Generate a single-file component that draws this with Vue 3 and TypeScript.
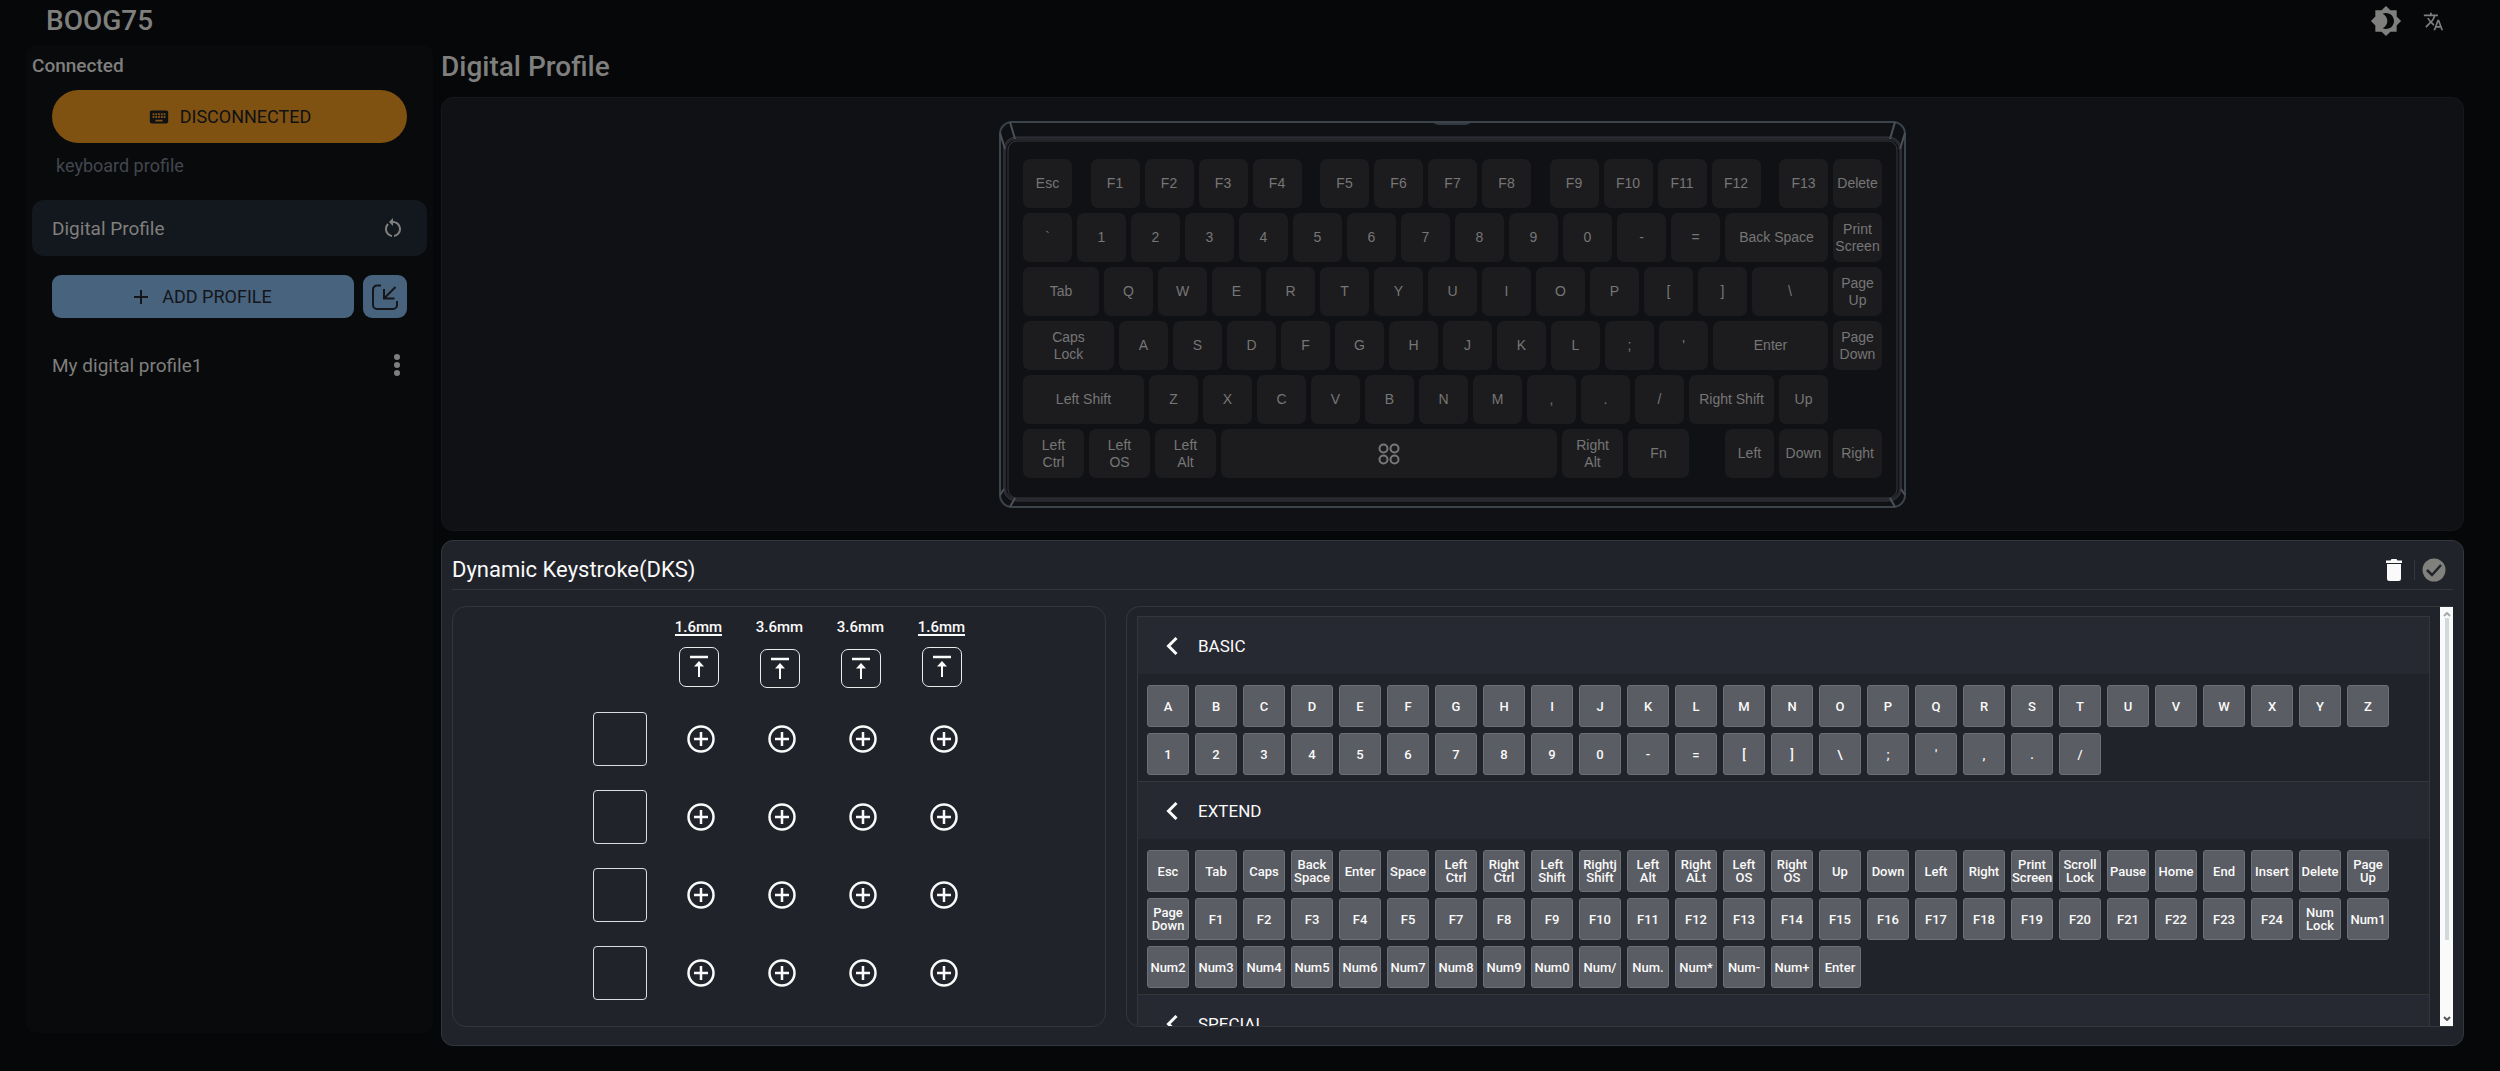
<script setup lang="ts">
interface Key {
  label: string
  width?: number
  grow?: boolean
  gap?: number
  icon?: boolean
}

const k = (label: string, width?: number): Key => ({ label, width })
const keys = (labels: string): Key[] => labels.split(' ').map((label) => k(label))
const fill = (label: string): Key => ({ label, grow: true })
const space = (gap?: number): Key => ({ label: '', gap: gap ?? 0 })

const rows: Key[][] = [
  [k('Esc'), space(), ...keys('F1 F2 F3 F4'), space(), ...keys('F5 F6 F7 F8'), space(), ...keys('F9 F10 F11 F12'), space(), k('F13'), k('Delete')],
  [...keys('` 1 2 3 4 5 6 7 8 9 0 - ='), fill('Back Space'), k('Print\nScreen')],
  [k('Tab', 76), ...keys('Q W E R T Y U I O P [ ]'), fill('\\'), k('Page\nUp')],
  [k('Caps\nLock', 91), ...keys("A S D F G H J K L ; '"), fill('Enter'), k('Page\nDown')],
  [k('Left Shift', 121), ...keys('Z X C V B N M , . /'), fill('Right Shift'), k('Up'), space(49)],
  [k('Left\nCtrl', 61), k('Left\nOS', 61), k('Left\nAlt', 61), { label: 'Space', grow: true, icon: true }, k('Right\nAlt', 61), k('Fn', 61), space(26), k('Left'), k('Down'), k('Right')],
]

const groups: { name: string; keys: string[] }[] = [
  {
    name: 'BASIC',
    keys: "A B C D E F G H I J K L M N O P Q R S T U V W X Y Z 1 2 3 4 5 6 7 8 9 0 - = [ ] \\ ; ' , . /".split(' '),
  },
  {
    name: 'EXTEND',
    keys: [
      'Esc', 'Tab', 'Caps', 'Back Space', 'Enter', 'Space', 'Left Ctrl', 'Right Ctrl', 'Left Shift', 'Rightj Shift',
      'Left Alt', 'Right ALt', 'Left OS', 'Right OS', 'Up', 'Down', 'Left', 'Right', 'Print Screen', 'Scroll Lock',
      'Pause', 'Home', 'End', 'Insert', 'Delete', 'Page Up', 'Page Down', 'F1', 'F2', 'F3', 'F4', 'F5', 'F7', 'F8',
      'F9', 'F10', 'F11', 'F12', 'F13', 'F14', 'F15', 'F16', 'F17', 'F18', 'F19', 'F20', 'F21', 'F22', 'F23', 'F24',
      'Num Lock', 'Num1', 'Num2', 'Num3', 'Num4', 'Num5', 'Num6', 'Num7', 'Num8', 'Num9', 'Num0', 'Num/', 'Num.',
      'Num*', 'Num-', 'Num+', 'Enter',
    ],
  },
  { name: 'SPECIAL', keys: [] },
]

const travel: { depth: string; active: boolean }[] = [
  { depth: '1.6mm', active: true },
  { depth: '3.6mm', active: false },
  { depth: '3.6mm', active: false },
  { depth: '1.6mm', active: true },
]
</script>

<template>
  <div class="app">
    <header class="topbar">
      <h1 class="brand">BOOG75</h1>
      <div class="tools">
        <button class="icon-btn" aria-label="Toggle theme">
          <svg width="32" height="32" viewBox="0 0 24 24" fill="currentColor"><path d="M20 8.69V4h-4.69L12 .69 8.69 4H4v4.69L.69 12 4 15.31V20h4.69L12 23.31 15.31 20H20v-4.69L23.31 12 20 8.69zM12 18c-.89 0-1.74-.2-2.5-.55C11.56 16.5 13 14.42 13 12s-1.44-4.5-3.5-5.45C10.26 6.2 11.11 6 12 6c3.31 0 6 2.69 6 6s-2.69 6-6 6z" /></svg>
        </button>
        <button class="icon-btn" aria-label="Language">
          <svg width="21" height="21" viewBox="0 0 24 24" fill="currentColor"><path d="M12.87 15.07l-2.54-2.51.03-.03c1.74-1.94 2.98-4.17 3.71-6.53H17V4h-7V2H8v2H1v1.99h11.17C11.5 7.92 10.44 9.75 9 11.35 8.07 10.32 7.3 9.19 6.69 8h-2c.73 1.63 1.73 3.17 2.98 4.56l-5.09 5.02L4 19l5-5 3.11 3.11.76-2.04zM18.5 10h-2L12 22h2l1.12-3h4.75L21 22h2l-4.5-12zm-2.62 7l1.62-4.33L19.12 17h-3.24z" /></svg>
        </button>
      </div>
    </header>

    <div class="columns">
      <aside class="sidebar">
        <h2 class="status">Connected</h2>
        <button class="connect">
          <svg width="22" height="22" viewBox="0 0 24 24" fill="currentColor"><path d="M20 5H4c-1.1 0-1.99.9-1.99 2L2 17c0 1.1.9 2 2 2h16c1.1 0 2-.9 2-2V7c0-1.1-.9-2-2-2zm-9 3h2v2h-2V8zm0 3h2v2h-2v-2zM8 8h2v2H8V8zm0 3h2v2H8v-2zm-1 2H5v-2h2v2zm0-3H5V8h2v2zm9 7H8v-2h8v2zm0-4h-2v-2h2v2zm0-3h-2V8h2v2zm3 3h-2v-2h2v2zm0-3h-2V8h2v2z" /></svg>
          DISCONNECTED
        </button>
        <p class="caption">keyboard profile</p>
        <div class="profile profile--active">
          <span>Digital Profile</span>
          <button class="icon-btn" aria-label="Reset profile">
            <svg width="24" height="24" viewBox="0 0 24 24" fill="currentColor"><path d="M12 5V2L8 6l4 4V7c3.31 0 6 2.69 6 6 0 2.97-2.17 5.43-5 5.91v2.02c3.95-.49 7-3.85 7-7.93 0-4.42-3.58-8-8-8zM6 13c0-1.65.67-3.15 1.76-4.24L6.34 7.34C4.9 8.79 4 10.79 4 13c0 4.08 3.05 7.44 7 7.93v-2.02c-2.83-.48-5-2.94-5-5.91z" /></svg>
          </button>
        </div>
        <div class="actions">
          <button class="blue add">
            <svg width="14" height="14" viewBox="0 0 14 14" fill="none" stroke="currentColor" stroke-width="2"><path d="M7 0v14M0 7h14" /></svg>
            ADD PROFILE
          </button>
          <button class="blue import" aria-label="Import profile">
            <svg width="26" height="26" viewBox="0 0 26 26" fill="none" stroke="currentColor" stroke-width="2"><path d="M9 1.500H5A4 4 0 0 0 1 5.500V21a4 4 0 0 0 4 4h16a4 4 0 0 0 4-4v-4M23.500 3 12 14.500M12 5v9.500h10.500" /></svg>
          </button>
        </div>
        <div class="profile">
          <span>My digital profile1</span>
          <button class="icon-btn more" aria-label="Profile menu">
            <svg width="6" height="24" viewBox="0 0 6 24" fill="currentColor"><circle cx="3" cy="4" r="3" /><circle cx="3" cy="12" r="3" /><circle cx="3" cy="20" r="3" /></svg>
          </button>
        </div>
      </aside>

      <main class="main">
        <h2 class="title">Digital Profile</h2>

        <section class="stage">
          <div class="keyboard">
            <svg class="case" viewBox="0 0 907 387" fill="none" stroke="#4a5058">
              <rect x="1" y="1" width="905" height="385" rx="12" stroke="#3b434b" stroke-width="2" />
              <rect x="5.500" y="17.500" width="896" height="361" rx="12" stroke="#25262c" stroke-width="3" />
              <rect x="9" y="20" width="889" height="357" rx="9" stroke="#34353c" />
              <rect x="5" y="16" width="897" height="364" rx="12" stroke="#34353c" />
              <path d="M11 1l5 17M1 12l5 16M896 1l-5 17M906 12l-5 16M1 374l4-6M16 377l-5 9M906 374l-4-6M891 377l5 9" stroke-width="2" />
              <path d="M434 2h38l-5 2h-28z" fill="#343a42" stroke="none" />
            </svg>
            <div v-for="(row, r) in rows" :key="r" class="key-row">
              <template v-for="(key, c) in row" :key="c">
                <span v-if="key.gap !== undefined" class="spacer" :class="{ 'spacer--auto': !key.gap }" :style="key.gap ? { width: key.gap + 'px' } : undefined" />
                <button v-else class="key" :class="{ 'key--grow': key.grow }" :style="key.width ? { width: key.width + 'px' } : undefined" :aria-label="key.label">
                  <svg v-if="key.icon" width="22" height="22" viewBox="0 0 22 22" fill="none" stroke="#77787a" stroke-width="2"><circle cx="5.500" cy="5.500" r="4" /><circle cx="16.500" cy="5.500" r="4" /><circle cx="5.500" cy="16.500" r="4" /><circle cx="16.500" cy="16.500" r="4" /></svg>
                  <template v-else>{{ key.label }}</template>
                </button>
              </template>
            </div>
          </div>
        </section>

        <section class="dks">
          <div class="dks-head">
            <h2 class="dks-title">Dynamic Keystroke(DKS)</h2>
            <div class="dks-tools">
              <button class="icon-btn" aria-label="Delete">
                <svg width="16" height="22" viewBox="0 0 16 22" fill="currentColor"><path d="M0 1.500h4.500L5.500 0h5l1 1.500H16V4H0zM1 5h14v14.500a2.500 2.500 0 0 1-2.500 2.500h-9A2.500 2.500 0 0 1 1 19.500z" /></svg>
              </button>
              <span class="rule" />
              <button class="icon-btn" aria-label="Confirm">
                <svg width="24" height="24" viewBox="0 0 24 24"><circle cx="12" cy="12" r="11.500" fill="#80817d" /><path d="M5 12l5 5 9-10" fill="none" stroke="#21232b" stroke-width="2.500" /></svg>
              </button>
            </div>
          </div>

          <div class="dks-body">
            <div class="binding">
              <div class="grid">
                <div class="travel-row">
                  <div v-for="(t, i) in travel" :key="i" class="travel" :class="{ 'travel--active': t.active }">
                    <span class="depth">{{ t.depth }}</span>
                    <button class="trigger" :aria-label="'Actuation point ' + t.depth">
                      <svg width="20" height="24" viewBox="0 0 20 24" fill="none" stroke="currentColor"><path d="M1 2h18" stroke-width="2.500" /><path d="M10 8v14" stroke-width="2" /><path d="M5 11.500 10 6l5 5.500z" fill="currentColor" stroke="none" /></svg>
                    </button>
                  </div>
                </div>
                <div v-for="n in 4" :key="n" class="bind-row">
                  <button class="slot" :aria-label="'Key slot ' + n" />
                  <div class="points">
                    <button v-for="p in 4" :key="p" class="plus" :aria-label="'Add action ' + p">
                      <svg width="28" height="28" viewBox="0 0 28 28" fill="none" stroke="currentColor" stroke-width="2.500"><circle cx="14" cy="14" r="12.500" /><path d="M14 7v14M7 14h14" /></svg>
                    </button>
                  </div>
                </div>
              </div>
            </div>

            <div class="picker">
              <div class="groups">
                <section v-for="group in groups" :key="group.name" class="group">
                  <button class="group-head">
                    <svg width="12" height="18" viewBox="0 0 12 18" fill="none" stroke="currentColor" stroke-width="3"><path d="M10.500 1 2.500 9l8 8" /></svg>
                    {{ group.name }}
                  </button>
                  <div class="group-keys">
                    <button v-for="(label, i) in group.keys" :key="i" class="cap">{{ label }}</button>
                  </div>
                </section>
              </div>
              <div class="scrollbar">
                <svg width="8" height="5" viewBox="0 0 8 5" fill="none" stroke="#a3a9b0" stroke-width="2"><path d="M1 4l3-3 3 3" /></svg>
                <span class="thumb" />
                <svg width="8" height="5" viewBox="0 0 8 5" fill="none" stroke="#50545a" stroke-width="2"><path d="M1 1l3 3 3-3" /></svg>
              </div>
            </div>
          </div>
        </section>
      </main>
    </div>
  </div>
</template>

<style>
body {
  background: #060709;
}
</style>

<style scoped>
.app {
  box-sizing: border-box;
  min-height: 100vh;
  padding: 0 36px 26px 26px;
  background: #060709;
  color: #7f7f7d;
  font-family: Roboto, "Liberation Sans", sans-serif;
  font-size: 19px;
}
.app * {
  box-sizing: border-box;
}
h1,
h2,
p {
  margin: 0;
  font-weight: 500;
}
button {
  padding: 0;
  border: 0;
  background: none;
  color: inherit;
  font: inherit;
}
svg {
  display: block;
  flex: none;
}
.topbar {
  display: flex;
  justify-content: space-between;
  height: 45px;
  padding: 0 20px;
}
.brand {
  font-size: 28px;
  line-height: 42px;
}
.tools {
  display: flex;
  align-items: center;
  gap: 21px;
  height: 42px;
}
.columns {
  display: flex;
  align-items: flex-start;
  gap: 8px;
}
.sidebar {
  flex: 0 0 406px;
  min-height: 988px;
  padding: 9px 6px 0;
  border-radius: 10px;
  background: #090a0c;
}
.status {
  font-size: 19px;
  line-height: 24px;
}
.connect {
  display: flex;
  align-items: center;
  justify-content: center;
  gap: 10px;
  width: 355px;
  height: 53px;
  margin: 12px 0 0 20px;
  border-radius: 27px;
  background: #7f5212;
  color: #101114;
  font-size: 18px;
}
.caption {
  margin: 11px 24px 22px;
  color: #43464f;
  font-size: 18px;
  font-weight: 400;
  line-height: 24px;
}
.profile {
  display: flex;
  align-items: center;
  justify-content: space-between;
  width: 395px;
  height: 56px;
  padding: 0 22px 0 20px;
  border-radius: 12px;
}
.profile--active {
  background: #13171e;
}
.more {
  margin-right: 5px;
}
.actions {
  display: flex;
  gap: 9px;
  margin: 19px 20px;
}
.blue {
  display: flex;
  align-items: center;
  justify-content: center;
  gap: 14px;
  height: 43px;
  border-radius: 9px;
  background: #48637d;
  color: #14161a;
  font-size: 18px;
}
.add {
  width: 302px;
}
.import {
  width: 44px;
}
.main {
  flex: 1;
  min-width: 0;
}
.title {
  height: 52px;
  font-size: 28px;
  line-height: 44px;
}
.stage {
  display: flex;
  justify-content: center;
  padding: 23px 0 22px;
  border: 1px solid #17181c;
  border-radius: 12px;
  background: #101115;
}
.keyboard {
  position: relative;
  display: flex;
  flex-direction: column;
  gap: 5px;
  width: 907px;
  padding: 38px 24px 30px;
}
.case {
  position: absolute;
  inset: 0;
}
.key-row {
  position: relative;
  display: flex;
  gap: 5px;
}
.key {
  flex: none;
  width: 49px;
  height: 49px;
  border-radius: 7px;
  background: #1c1c1e;
  color: #767676;
  font-family: "Liberation Sans", Arial, sans-serif;
  font-size: 14px;
  line-height: 17px;
  white-space: pre-line;
}
.key svg {
  margin: 0 auto;
}
.key--grow {
  flex: 1;
}
.spacer {
  flex: none;
}
.spacer--auto {
  flex: 1;
}
.dks {
  margin-top: 9px;
  padding: 0 10px 18px;
  border: 1px solid #34363c;
  border-radius: 12px;
  background: #21232b;
  color: #fafafa;
}
.dks-head {
  display: flex;
  align-items: center;
  justify-content: space-between;
  height: 49px;
  padding-top: 10px;
  border-bottom: 1px solid #34363c;
}
.dks-title {
  font-size: 22px;
  font-weight: 400;
  line-height: 30px;
}
.dks-tools {
  display: flex;
  align-items: center;
  padding-right: 7px;
}
.rule {
  width: 1px;
  height: 20px;
  margin: 0 7px 0 12px;
  background: #34363c;
}
.dks-body {
  display: flex;
  gap: 20px;
  height: 421px;
  margin-top: 16px;
}
.binding {
  flex: 0 0 654px;
  padding: 9px 0 0 20px;
  border: 1px solid #34363c;
  border-radius: 14px;
}
.grid {
  display: flex;
  flex-direction: column;
  gap: 24px;
  width: 392px;
  margin: 0 auto;
}
.travel-row {
  display: flex;
  height: 72px;
  padding-left: 65px;
}
.travel {
  display: flex;
  flex-direction: column;
  align-items: center;
  gap: 11px;
  width: 81px;
  font-size: 15px;
  font-weight: 500;
}
.depth {
  height: 22px;
  line-height: 22px;
}
.travel--active .depth {
  height: 20px;
  border-bottom: 2px solid #fafafa;
}
.trigger {
  display: flex;
  align-items: center;
  justify-content: center;
  width: 40px;
  height: 40px;
  border: 1px solid #e8eaec;
  border-radius: 7px;
}
.bind-row {
  display: flex;
  align-items: center;
  gap: 13px;
}
.slot {
  width: 54px;
  height: 54px;
  border: 1px solid #d9dde0;
  border-radius: 4px;
}
.points {
  display: flex;
}
.plus {
  display: flex;
  justify-content: center;
  width: 81px;
}
.picker {
  display: flex;
  flex: 1;
  min-width: 0;
  overflow: hidden;
  border: 1px solid #34363c;
  border-right: 0;
  border-radius: 14px 0 0 14px;
}
.groups {
  flex: 1;
  min-width: 0;
  margin: 9px 10px 0 10px;
  overflow: hidden;
}
.group {
  border: 1px solid #34363c;
  border-bottom: 0;
}
.group-head {
  display: flex;
  align-items: center;
  gap: 20px;
  width: 100%;
  height: 57px;
  padding-left: 28px;
  background: #272932;
  font-size: 17px;
}
.group-keys {
  display: flex;
  flex-wrap: wrap;
  gap: 6px;
  padding: 11px 9px 6px;
}
.cap {
  width: 42px;
  height: 42px;
  border: 1px solid #6b6f77;
  border-radius: 3px;
  background: #5a5d64;
  font-size: 13px;
  font-weight: 500;
  line-height: 13px;
}
.scrollbar {
  display: flex;
  flex-direction: column;
  align-items: center;
  flex: 0 0 13px;
  margin: -1px 0;
  padding: 6px 0;
  background: #fafafa;
}
.thumb {
  width: 4px;
  height: 322px;
  margin: 1px 0 auto;
  background: #d3d8dc;
}
</style>
